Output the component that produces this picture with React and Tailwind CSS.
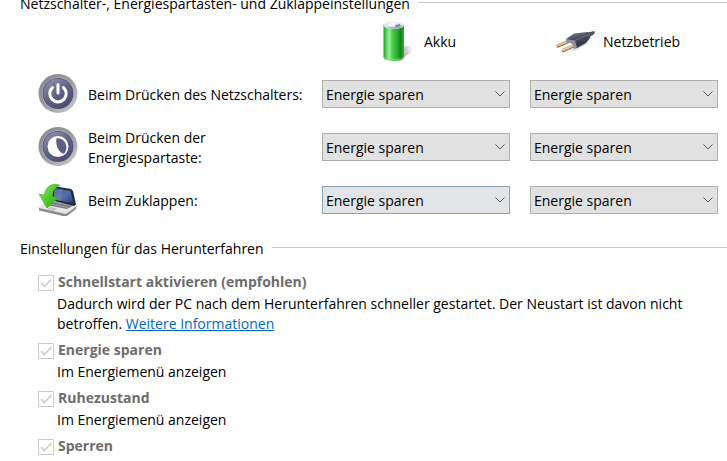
import React from "react";

function BatteryIcon() {
  return (
    <svg viewBox="0 0 40 44" className="h-11 w-10 shrink-0" aria-hidden="true">
      <defs>
        <linearGradient id="cell" x1="0" x2="1" y1="0" y2="0">
          <stop offset="0" stopColor="#259a2b" />
          <stop offset="0.13" stopColor="#55cf58" />
          <stop offset="0.28" stopColor="#9cee9a" />
          <stop offset="0.42" stopColor="#4fd052" />
          <stop offset="0.68" stopColor="#27ad2c" />
          <stop offset="0.84" stopColor="#0f8316" />
          <stop offset="1" stopColor="#36ad3a" />
        </linearGradient>
        <linearGradient id="cellShadow" x1="0" x2="1" y1="0.4" y2="0">
          <stop offset="0" stopColor="#777" stopOpacity="0.75" />
          <stop offset="1" stopColor="#999" stopOpacity="0" />
        </linearGradient>
      </defs>
      <path d="M24 40 L36 32 Q38 27 33 26 L27 26 Z" fill="url(#cellShadow)" />
      <path d="M7.500 5 V37 C7.500 42.500 28 42.500 28 37 V5 Z" fill="url(#cell)" />
      <path d="M7.500 36 C8 42 27.500 42 28 36 C26 40 10 40 7.500 36 Z" fill="#8bea83" opacity="0.5" />
      <ellipse cx="17.700" cy="5.500" rx="10" ry="3.600" fill="#d9e2e8" />
      <path d="M11 7.500 Q14 9 18 8.800 Q24 8.500 26.500 6 L23 4.500 L17 7 Z" fill="#a7a8c8" />
      <ellipse cx="17" cy="4.500" rx="5" ry="2" fill="#f4f6fa" />
      <path d="M19 5 L24 4 L24 6 L20 7.500 Z" fill="#7f84b4" />
    </svg>
  );
}

function PlugIcon() {
  return (
    <svg viewBox="0 0 40 40" className="size-10 shrink-0" aria-hidden="true">
      <defs>
        <linearGradient id="plug" x1="0.3" x2="0.7" y1="0" y2="1">
          <stop offset="0" stopColor="#737685" />
          <stop offset="0.4" stopColor="#464a5c" />
          <stop offset="1" stopColor="#2b2e40" />
        </linearGradient>
      </defs>
      <path d="M12 28 L20 29 L32 22 L36 16 L30 22 Z" fill="#aaa" opacity="0.4" />
      <path d="M31 11 L39 9 Q41 11 38 13 L34 15 Z" fill="#54545a" />
      <path d="M3 24 L13 19.500" stroke="#8d684e" strokeWidth="3.200" strokeLinecap="round" />
      <path d="M3 23.500 L13 19" stroke="#ebbb88" strokeWidth="2.200" strokeLinecap="round" />
      <path d="M8.500 28.500 L19 23.500" stroke="#8d684e" strokeWidth="3.200" strokeLinecap="round" />
      <path d="M8.500 28 L19 23" stroke="#f0c494" strokeWidth="2.200" strokeLinecap="round" />
      <path d="M11 17 L19 11.500 L33 10 L36 12 L35 16 L31 21 L22 26 L19 26.500 L18 21 L11 20 Z" fill="url(#plug)" />
      <path d="M11 17 L20 18.500 L22 25.500 L18.500 26.500 L17.500 22 L11 20 Z" fill="#8f91a4" />
      <path d="M20 18.500 L30 14 L35 13" stroke="#777b91" strokeWidth="0.800" fill="none" />
    </svg>
  );
}

function RoundButtonIcon({ id, children }) {
  return (
    <svg viewBox="0 0 40 40" className="size-10 shrink-0" aria-hidden="true">
      <defs>
        <linearGradient id={id + "Rim"} x1="0" x2="1" y1="0" y2="1">
          <stop offset="0" stopColor="#85858a" />
          <stop offset="0.5" stopColor="#9c9ca0" />
          <stop offset="1" stopColor="#cfcfd1" />
        </linearGradient>
        <linearGradient id={id + "Face"} x1="0.2" x2="0.8" y1="0" y2="1">
          <stop offset="0" stopColor="#8d8fad" />
          <stop offset="0.5" stopColor="#5f6186" />
          <stop offset="1" stopColor="#494a70" />
        </linearGradient>
      </defs>
      <circle cx="20" cy="19.500" r="19.500" fill={`url(#${id}Rim)`} />
      <circle cx="20" cy="19.500" r="16" fill="#c3c3d0" />
      <circle cx="20" cy="19.500" r="15.500" fill="#50516f" />
      <circle cx="20" cy="19.500" r="14.700" fill={`url(#${id}Face)`} />
      {children}
    </svg>
  );
}

function PowerIcon() {
  return (
    <RoundButtonIcon id="power">
      <path d="M14.500 13.600 A8.200 8.200 0 1 0 25.500 13.600" fill="none" stroke="#fff" strokeWidth="3" strokeLinecap="round" />
      <path d="M20 10.500 V19" stroke="#fff" strokeWidth="3" strokeLinecap="round" />
    </RoundButtonIcon>
  );
}

function SleepIcon() {
  return (
    <RoundButtonIcon id="sleep">
      <circle cx="20" cy="19.500" r="10.500" fill="#fff" />
      <path d="M18.500 11.200 C26 10.500 30.500 18 27.500 24.500 C26.500 26.500 25.500 27 24.500 26.500 C19.500 23.500 17.500 17.500 18.500 11.200 Z" fill="#5d5f85" />
    </RoundButtonIcon>
  );
}

function LidIcon() {
  return (
    <svg viewBox="0 0 40 40" className="size-10 shrink-0" aria-hidden="true">
      <defs>
        <linearGradient id="screen" x1="0" x2="1" y1="0" y2="1">
          <stop offset="0" stopColor="#3c4b78" />
          <stop offset="0.5" stopColor="#5773ad" />
          <stop offset="1" stopColor="#243b7d" />
        </linearGradient>
        <linearGradient id="arrow" x1="0" x2="1" y1="0" y2="1">
          <stop offset="0" stopColor="#98ed67" />
          <stop offset="0.5" stopColor="#4fcb2d" />
          <stop offset="1" stopColor="#32ac1d" />
        </linearGradient>
      </defs>
      <path d="M1 28 L7 23 L39 26 L38 29 L29 36 L25 36 L1 30.500 Z" fill="#8b8b8f" />
      <path d="M1 28 L10 20 L39 26 L28 34 Z" fill="#e6e6e7" />
      <path d="M11 20.500 L35 25.500 L29 29 L6 24.500 Z" fill="#77797f" />
      <path d="M9 23.500 L30 27.500 M12 21.500 L33 25.500" stroke="#b5b7bd" strokeWidth="0.700" />
      <path d="M12 27 L19 28.500 L16 31 L9 29.500 Z" fill="#c3c3c5" />
      <path d="M15 6 L33 9 L35 11 L38 24.500 L36 26 L14 20.500 Z" fill="#252839" />
      <path d="M16 8 L32.500 11 L35.500 23.500 L16 19.500 Z" fill="url(#screen)" />
      <path d="M16 8 L25 9.500 L22 20.500 L16 19.500 Z" fill="#8096c0" opacity="0.4" />
      <path d="M22 5.500 C15 2 7.500 6 6.500 15 L1 14 L9 28 L20.500 17.500 L14.500 16.500 C14 11 17 7.500 22 5.500 Z" fill="url(#arrow)" stroke="#35a81c" strokeWidth="0.600" />
    </svg>
  );
}

function SectionHeading({ children }) {
  return (
    <h2 className="flex h-5 items-center gap-2 pl-5 whitespace-nowrap">
      {children}
      <span className="mb-1 h-px flex-1 bg-[#c8c8c8]" />
    </h2>
  );
}

function ActionSelect({ label, active = false }) {
  return (
    <div className="relative">
      <select
        aria-label={label}
        className={
          "block h-7 w-full appearance-none border pt-0.5 pl-[3px] pr-6 outline-none " +
          (active ? "border-[#8aa2b8] bg-[#e2e4e7]" : "border-[#adadad] bg-[#e1e1e1]")
        }
      >
        <option>Energie sparen</option>
        <option>Nichts unternehmen</option>
        <option>Ruhezustand</option>
        <option>Herunterfahren</option>
      </select>
      <svg viewBox="0 0 10 6" className="pointer-events-none absolute top-[11px] right-[5px] h-1.5 w-2.5" aria-hidden="true">
        <path d="M0.500 0.500 L5 5 L9.500 0.500" fill="none" stroke="#555" strokeWidth="1" />
      </svg>
    </div>
  );
}

const columns = "grid grid-cols-[1fr_188px_188px] items-center gap-x-5 pr-[9px] pl-[38px]";

const actions = [
  { label: "Beim Drücken des Netzschalters:", Icon: PowerIcon },
  { label: "Beim Drücken der Energiespartaste:", Icon: SleepIcon },
  { label: "Beim Zuklappen:", Icon: LidIcon, active: true },
];

const options = [
  { id: "fast", title: "Schnellstart aktivieren (empfohlen)" },
  { id: "sleep", title: "Energie sparen" },
  { id: "hibernate", title: "Ruhezustand" },
  { id: "lock", title: "Sperren" },
];

function ShutdownOption({ id, title }) {
  return (
    <div>
      <div className="flex h-5 items-center gap-1">
        <span className="relative mt-0.5 size-4">
          <input id={id} type="checkbox" defaultChecked disabled className="block size-4 appearance-none border border-[#ccc] bg-white" />
          <svg viewBox="0 0 16 16" className="pointer-events-none absolute inset-0 size-4" aria-hidden="true">
            <path d="M3 8 L6.500 11.500 L13 4.500" fill="none" stroke="#c8c8c8" strokeWidth="1.400" />
          </svg>
        </span>
        <label htmlFor={id} className="font-bold text-[#6d6d6d]">
          {title}
        </label>
      </div>
      {id === "fast" && (
        <p className="mt-0.5 max-w-[650px] pl-[19px]">
          Dadurch wird der PC nach dem Herunterfahren schneller gestartet. Der Neustart ist davon nicht betroffen.{" "}
          <a href="#info" className="text-[#0066cc] underline">
            Weitere Informationen
          </a>
        </p>
      )}
      {(id === "sleep" || id === "hibernate") && <p className="mt-0.5 pl-[19px]">Im Energiemenü anzeigen</p>}
    </div>
  );
}

export default function App() {
  return (
    <main className="overflow-hidden bg-white font-['Open_Sans','Noto_Sans',sans-serif] text-[14px] leading-5 text-black">
      <section className="-mt-1.5">
        <SectionHeading>Netzschalter-, Energiespartasten- und Zuklappeinstellungen</SectionHeading>
        <div className={columns + " mt-1.5"}>
          <div className="col-start-2 flex items-center gap-2 pl-[54px]">
            <BatteryIcon />
            Akku
          </div>
          <div className="flex items-center gap-2 pl-[25px]">
            <PlugIcon />
            Netzbetrieb
          </div>
        </div>
        <div className="mt-2.5 flex flex-col gap-[13px]">
          {actions.map(({ label, Icon, active }) => (
            <div key={label} className={columns}>
              <div className="-mr-3 flex h-10 items-center gap-2.5">
                <Icon />
                <span className="flex-1 pt-0.5">{label}</span>
              </div>
              <ActionSelect label={label + " Akku"} active={active} />
              <ActionSelect label={label + " Netzbetrieb"} />
            </div>
          ))}
        </div>
      </section>
      <section className="mt-[19px]">
        <SectionHeading>Einstellungen für das Herunterfahren</SectionHeading>
        <div className="mt-[13px] flex flex-col gap-1.5 pl-[38px]">
          {options.map((option) => (
            <ShutdownOption key={option.id} {...option} />
          ))}
        </div>
      </section>
    </main>
  );
}
